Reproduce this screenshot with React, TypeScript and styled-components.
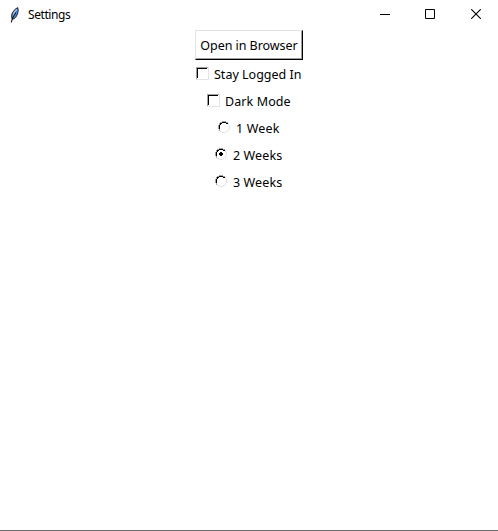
import React from "react";
import styled, { createGlobalStyle } from "styled-components";

const GlobalStyle = createGlobalStyle`
  * { box-sizing: border-box; }
  body { margin: 0; background: #fff; overflow: hidden; }
`;

const Window = styled.main`
  display: flex;
  flex-direction: column;
  width: 498px;
  height: 531px;
  background: #fff;
  border-bottom: 1px solid #6b6b6b;
  color: #000;
  font-family: "Noto Sans", sans-serif;
  font-size: 12.5px;
`;

const TitleBar = styled.header`
  display: flex;
  align-items: center;
  height: 30px;
  flex: none;
  padding-left: 8px;
`;

const Title = styled.span`
  flex: 1;
  margin-left: 6px;
  font-size: 12px;
  letter-spacing: -0.42px;
  line-height: 30px;
`;

const Caption = styled.button<{ $before?: number }>`
  display: grid;
  place-items: center;
  width: 44px;
  height: 30px;
  margin: 0 0 0 ${(p) => p.$before ?? 0}px;
  padding: 0 0 2px;
  border: 0;
  background: transparent;
`;

const Content = styled.section`
  display: flex;
  flex-direction: column;
  align-items: center;
`;

const PushButton = styled.button`
  width: 108px;
  height: 30px;
  padding: 0;
  border: 1px solid #e3e3e3;
  border-right-color: #000;
  border-bottom-color: #000;
  box-shadow: inset -1px -1px 0 #a0a0a0;
  background: #fff;
  color: #000;
  font: inherit;
  white-space: nowrap;
`;

const Label = styled.span<{ $spacing?: number }>`
  letter-spacing: ${(p) => p.$spacing ?? 0}px;
  white-space: nowrap;
`;

const Option = styled.label<{ $width: number; $gap: number }>`
  display: flex;
  align-items: flex-start;
  gap: ${(p) => p.$gap}px;
  width: ${(p) => p.$width}px;
  height: 27px;
  line-height: 29px;
`;

const Mark = styled.svg`
  display: block;
  flex: none;
`;

const OptionMark = styled(Mark)`
  margin-top: 7px;
`;

function Feather() {
  return (
    <Mark width="14" height="18" viewBox="0 0 14 18">
      <path d="M4.3 13C2.4 9.5 5 3.8 9.7 1.8C11.3 4.5 9.2 11 5.6 13Z" fill="#4f91e6" stroke="#33363c" strokeWidth="1.1" />
      <path d="M5.3 9.5C6 6.4 7.2 4.5 8.8 3.2" fill="none" stroke="#9cc8fa" strokeWidth="1.2" />
      <path d="M3.3 16.5C3.7 13.5 5.2 10.5 8 6.5" fill="none" stroke="#111" strokeWidth="1.1" />
    </Mark>
  );
}

function CheckMark() {
  return (
    <OptionMark width="13" height="13" shapeRendering="crispEdges">
      <path d="M0 12.5H12.5V0" fill="none" stroke="#e3e3e3" />
      <path d="M0 12V0H12V1H1V12Z" fill="#a0a0a0" />
      <path d="M1 11V1H11V2H2V11Z" fill="#000" />
    </OptionMark>
  );
}

function RadioMark({ checked }: { checked?: boolean }) {
  return (
    <OptionMark width="12" height="12" shapeRendering="crispEdges">
      <path d="M10 2H11V4H12V8H11V10H10V11H8V12H4V11H2V10H4V11H8V10H10V8H11V4H10Z" fill="#e3e3e3" />
      <path d="M4 0H8V1H10V2H8V1H4V2H2V4H1V8H2V10H1V8H0V4H1V2H2V1H4Z" fill="#a0a0a0" />
      <path d="M4 1H8V2H10V3H8V2H4V3H3V4H2V8H1V4H2V2H4Z" fill="#000" />
      {checked && <path d="M5 4H7V5H8V7H7V8H5V7H4V5H5Z" fill="#000" />}
    </OptionMark>
  );
}

export default function App() {
  return (
    <>
      <GlobalStyle />
      <Window>
        <TitleBar>
          <Feather />
          <Title>Settings</Title>
          <Caption aria-label="Minimize">
            <Mark width="10" height="10"><path d="M0 5.5H10" stroke="#000" /></Mark>
          </Caption>
          <Caption $before={1} aria-label="Maximize">
            <Mark width="10" height="10"><path d="M.5.5H9.5V9.5H.5Z" fill="none" stroke="#000" /></Mark>
          </Caption>
          <Caption $before={2} aria-label="Close">
            <Mark width="10" height="10"><path d="M.2.2L9.8 9.8M9.8.2L.2 9.8" stroke="#000" strokeWidth="1.1" /></Mark>
          </Caption>
        </TitleBar>
        <Content>
          <PushButton><Label $spacing={-0.05}>Open in Browser</Label></PushButton>
          <Option $width={106} $gap={5}><CheckMark /><Label>Stay Logged In</Label></Option>
          <Option $width={84} $gap={5}><CheckMark /><Label $spacing={0.1}>Dark Mode</Label></Option>
          <Option $width={62} $gap={6}><RadioMark /><Label $spacing={0.15}>1 Week</Label></Option>
          <Option $width={68} $gap={6}><RadioMark checked /><Label $spacing={0.1}>2 Weeks</Label></Option>
          <Option $width={68} $gap={6}><RadioMark /><Label $spacing={0.1}>3 Weeks</Label></Option>
        </Content>
      </Window>
    </>
  );
}
